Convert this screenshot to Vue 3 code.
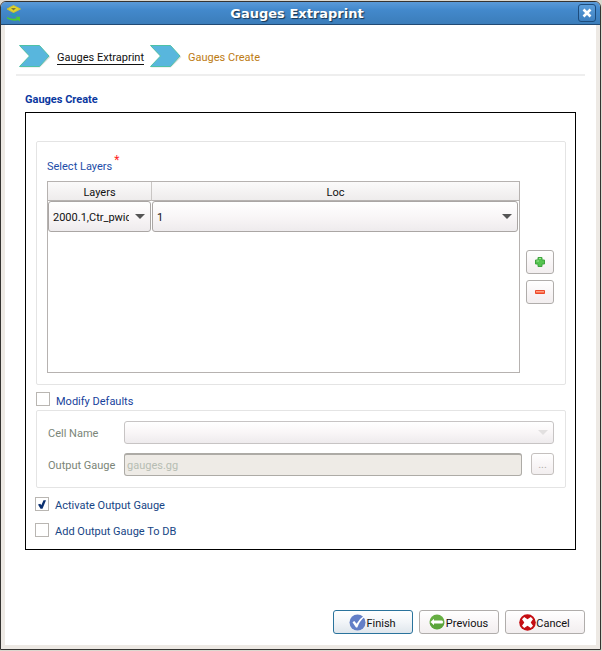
<script setup>
import { ref } from 'vue'

const layer = ref('2000.1,Ctr_pwid')
const loc = ref('1')
const modifyDefaults = ref(false)
const activateOutput = ref(true)
const addToDb = ref(false)
const outputGauge = ref('gauges.gg')
</script>

<template>
  <div class="desktop">
    <div class="window">
      <header class="titlebar">
        <svg class="app-icon" width="16" height="18" viewBox="0 0 16 18" aria-hidden="true">
          <path d="M1 5 7.500 1.500 14.500 5 7.500 8.500Z" fill="#e0d52c" stroke="#c6c03a" />
          <path d="M5 4h5L7.500 6.500Z" fill="#7d7a3c" />
          <path d="M4 10.500 7.500 9l4 1.500-4 2.500Z" fill="#259cae" />
          <path d="M1 13q4.500 2.500 10 1.200L9.500 12.800h4.500v4.700l-1.500-1.200Q5 17.500 1 14.500Z" fill="#4bc936" />
        </svg>
        <h1>Gauges Extraprint</h1>
        <button class="close" type="button" aria-label="Close">
          <svg width="10" height="10" viewBox="0 0 10 10"><path d="M1.500 1.500l7 7M8.500 1.500l-7 7" stroke="#fff" stroke-width="2.600" /></svg>
        </button>
      </header>

      <main class="content">
        <nav class="steps">
          <svg class="arrow" width="34" height="24" viewBox="0 0 34 24" aria-hidden="true">
            <path d="M2 2.500H22L32.500 13 22 23.500H2L12 13Z" fill="#000" opacity=".12" />
            <path d="M1.500 1.500H21.500L31 12 21.500 22.500H1.500L11.500 12Z" fill="#58b6dd" stroke="#4fc1a6" />
          </svg>
          <a class="done" href="#">Gauges Extraprint</a>
          <svg class="arrow" width="34" height="24" viewBox="0 0 34 24" aria-hidden="true">
            <path d="M2 2.500H22L32.500 13 22 23.500H2L12 13Z" fill="#000" opacity=".12" />
            <path d="M1.500 1.500H21.500L31 12 21.500 22.500H1.500L11.500 12Z" fill="#58b6dd" stroke="#4fc1a6" />
          </svg>
          <a class="current" href="#">Gauges Create</a>
        </nav>

        <h2>Gauges Create</h2>

        <section class="frame">
          <div class="group layers">
            <div class="caption">Select Layers<span class="star">*</span></div>
            <div class="layers-row">
              <div class="table-box">
                <table>
                  <colgroup><col class="col-layers" /><col /></colgroup>
                  <thead>
                    <tr><th>Layers</th><th>Loc</th></tr>
                  </thead>
                  <tbody>
                    <tr>
                      <td>
                        <div class="combo">
                          <select v-model="layer" aria-label="Layers"><option>2000.1,Ctr_pwid</option></select>
                        </div>
                      </td>
                      <td>
                        <div class="combo">
                          <select v-model="loc" aria-label="Loc"><option>1</option></select>
                        </div>
                      </td>
                    </tr>
                  </tbody>
                </table>
              </div>
              <div class="tools">
                <button class="btn" type="button" aria-label="Add row">
                  <svg width="12" height="12" viewBox="0 0 12 12">
                    <path d="M4 1.500h4V4h2.500v4H8v2.500H4V8H1.500V4H4Z" fill="#55c44f" stroke="#3fa43f" stroke-linejoin="round" />
                    <path d="M5 2.500h2M2.500 5H5" stroke="#a0e695" />
                  </svg>
                </button>
                <button class="btn" type="button" aria-label="Remove row">
                  <svg width="12" height="12" viewBox="0 0 12 12">
                    <path d="M1.500 4.500h9v3h-9Z" fill="#ff7452" stroke="#ea4a2c" />
                    <path d="M2 5.500h8" stroke="#ffa184" />
                  </svg>
                </button>
              </div>
            </div>
          </div>

          <label class="check modify"><input v-model="modifyDefaults" type="checkbox" /><span>Modify Defaults</span></label>

          <div class="group defaults">
            <label for="cell">Cell Name</label>
            <div class="combo cell">
              <select id="cell" disabled><option></option></select>
            </div>
            <label for="gauge">Output Gauge</label>
            <input id="gauge" v-model="outputGauge" class="field" type="text" disabled />
            <button class="btn browse" type="button" disabled>...</button>
          </div>

          <div class="options">
            <label class="check"><input v-model="activateOutput" type="checkbox" /><span>Activate Output Gauge</span>
              <svg v-if="activateOutput" class="tick" width="8" height="9" viewBox="0 0 8 9" aria-hidden="true"><path d="M0 4.500 2.300 3.700l1 1.600L5.500 .2H8L4.500 8.800H2.500Z" fill="#0a2f70" /></svg>
            </label>
            <label class="check"><input v-model="addToDb" type="checkbox" /><span>Add Output Gauge To DB</span></label>
          </div>
        </section>

        <footer class="actions">
          <button class="btn primary" type="button">
            <svg width="17" height="17" viewBox="0 0 17 17" aria-hidden="true">
              <circle cx="8.500" cy="8.500" r="8" fill="#637fc7" />
              <path d="M3.500 8.300 5.300 7l2.300 2.800Q10 5 15 1.800l.7.900Q10.500 7 8.300 13.500H7Z" fill="#fff" />
            </svg><span>Finish</span>
          </button>
          <button class="btn" type="button">
            <svg width="17" height="17" viewBox="0 0 17 17" aria-hidden="true">
              <circle cx="8" cy="8" r="7.500" fill="#66ae43" />
              <path d="M.6 9a7.500 7.500 0 0 0 14.800 0Z" fill="#4f9934" opacity=".5" />
              <path d="M1.500 8 5 4.800v1.700h8q1 0 1 1.500t-1 1.500H5v1.700Z" fill="#fff" />
            </svg><span>Previous</span>
          </button>
          <button class="btn" type="button">
            <svg width="17" height="17" viewBox="0 0 17 17" aria-hidden="true">
              <circle cx="8.500" cy="8.500" r="8.300" fill="#c50d12" />
              <path d="M3 5.200 5.200 3 8.500 5.300 11.800 3 14 5.200 11.700 8.500 14 11.800 11.800 14 8.500 11.700 5.200 14 3 11.800 5.300 8.500Z" fill="#fff" />
            </svg><span>Cancel</span>
          </button>
        </footer>
      </main>
    </div>
  </div>
</template>

<style>
body {
  margin: 0;
  background: #dcd8cf;
}
</style>

<style scoped>
* {
  box-sizing: border-box;
}

.desktop {
  min-height: 100vh;
  padding: 1px 1px 1px 0;
  display: flex;
  background: #dcd8cf;
  font: 11px/16px Roboto, sans-serif;
  color: #111;
}

.window {
  flex: 1;
  display: flex;
  flex-direction: column;
  border: 1px solid #353331;
  border-radius: 6px 6px 0 0;
  background: #ede9e4;
  overflow: hidden;
}

.titlebar {
  display: flex;
  align-items: center;
  height: 23px;
  padding: 0 4px 0 5px;
  border-bottom: 1px solid #214a74;
  background: linear-gradient(#5a9ad8, #4389cc 35%, #3b7dba);
}

.app-icon {
  flex: none;
}

.titlebar h1 {
  flex: 1;
  margin: 0;
  padding: 1px 6px 0 0;
  text-align: center;
  font: bold 13px/20px "DejaVu Sans", sans-serif;
  color: #fff;
  text-shadow: 1px 1px 1px #17334e;
}

.close {
  display: grid;
  place-items: center;
  width: 18px;
  height: 18px;
  padding: 0;
  border: 1px solid #1d4c7c;
  border-radius: 3px;
  background: linear-gradient(#5b9edb, #3d7fbf);
}

.content {
  flex: 1;
  display: flex;
  flex-direction: column;
  margin: 0 4px 4px;
  padding: 19px 11px 11px;
  background: #fff;
}

.steps {
  display: flex;
  align-items: center;
  height: 32px;
  padding: 0 0 6px 2px;
  border-bottom: 2px solid #eee;
}

.steps a {
  padding-top: 3px;
  border-bottom: 1px solid transparent;
  line-height: 13px;
  text-decoration: none;
}

.arrow {
  margin-right: 5px;
}

.steps .done {
  margin-right: 5px;
  color: #111;
  border-color: #111;
}

.steps .current {
  color: #bd7b12;
}

h2 {
  margin: 16px 9px 4px;
  font-size: 11px;
  line-height: 16px;
  color: #0b38a0;
}

.frame {
  margin: 0 9px;
  padding: 28px 9px 9px 10px;
  border: 1px solid #000;
}

.group {
  border: 1px solid #e4e4e4;
  border-radius: 2px;
}

.layers {
  padding: 17px 11px 11px 10px;
}

.caption {
  margin-bottom: 6px;
  color: #1d4da8;
}

.star {
  margin-left: 2px;
  vertical-align: 6px;
  line-height: 1px;
  font-size: 12px;
  color: #f22;
}

.layers-row {
  display: flex;
  gap: 6px;
}

.table-box {
  flex: 1;
  height: 192px;
  border: 1px solid #b6b2b0;
}

table {
  width: 100%;
  table-layout: fixed;
  border-collapse: separate;
  border-spacing: 0;
}

.col-layers {
  width: 103px;
}

th {
  height: 19px;
  padding: 3px 0 0;
  border-bottom: 1px solid #b6b2b0;
  background: linear-gradient(#fbfafa, #eeecec);
  font-weight: normal;
  line-height: 15px;
}

th + th {
  border-left: 1px solid #c9c6c4;
}

td {
  padding: 0;
}

td + td {
  padding: 0 1px;
}

.combo {
  position: relative;
  display: flex;
}

.combo::after {
  content: "";
  position: absolute;
  top: 50%;
  right: 6px;
  margin-top: -3px;
  border: 5px solid transparent;
  border-top-color: #555;
  border-bottom-width: 0;
  pointer-events: none;
}

select {
  appearance: none;
  width: 100%;
  height: 31px;
  padding: 2px 21px 0 4px;
  border: 1px solid #aaa6a4;
  border-radius: 3px;
  background: linear-gradient(#fff, #f9f6f7 50%, #eeebed);
  font: inherit;
  color: #111;
  text-overflow: clip;
}

.cell select {
  height: 23px;
  border-color: #c7c4c4;
  opacity: 1;
}

.cell::after {
  border-top-color: #e2e0e0;
}

.tools {
  display: flex;
  flex-direction: column;
  gap: 6px;
  padding-top: 69px;
}

.btn {
  display: flex;
  align-items: center;
  justify-content: center;
  width: 80px;
  height: 24px;
  padding: 0;
  border: 1px solid #b0adab;
  border-radius: 3px;
  background: linear-gradient(#fff, #f9f6f7 50%, #f2eeef);
  font: inherit;
  color: #111;
}

.tools .btn {
  width: 28px;
}

.check {
  position: relative;
  display: flex;
  gap: 6px;
  height: 16px;
  color: #174585;
}

.check input {
  appearance: none;
  width: 14px;
  height: 14px;
  margin: 0;
  border: 1px solid #b9b6b2;
  background: #fff;
}

.check span {
  padding-top: 1px;
}

.tick {
  position: absolute;
  top: 3px;
  left: 3px;
}

.modify {
  margin: 7px 0 2px;
  color: #173f9c;
}

.modify span {
  padding-top: 2px;
}

.defaults {
  display: grid;
  grid-template-columns: 67px 1fr 23px;
  align-items: center;
  column-gap: 9px;
  row-gap: 9px;
  padding: 10px 11px 11px;
  color: #7b8578;
}

.defaults label {
  padding-top: 3px;
  white-space: nowrap;
}

.defaults .cell {
  grid-column: 2 / 4;
}

.field {
  width: 100%;
  min-width: 0;
  height: 23px;
  padding: 1px 2px 0;
  border: 1px solid #adaba6;
  border-top-width: 2px;
  border-radius: 3px;
  background: #eeebe6;
  font: inherit;
  color: #b6bdb3;
}

.defaults .browse {
  align-self: start;
  width: 23px;
  height: 22px;
  padding-top: 2px;
  border-color: #c4c0be;
  color: #b0aeac;
}

.options {
  display: grid;
  gap: 10px;
  margin: 9px 0 1px -1px;
}

.actions {
  display: flex;
  justify-content: flex-end;
  gap: 6px;
  margin-top: auto;
}

.actions .btn {
  padding-right: 1px;
}

.actions span {
  padding-top: 3px;
}

.actions .primary {
  border-color: #2a739c;
  background: linear-gradient(#fff, #f2f5f8 50%, #dfe6ec);
}
</style>
